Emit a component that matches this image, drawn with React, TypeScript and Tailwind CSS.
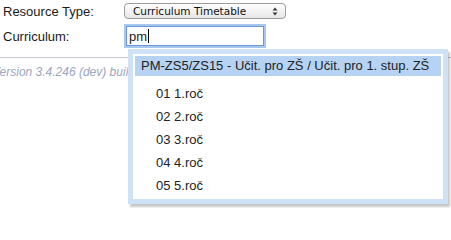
import React from "react"

const options = ["01 1.roč", "02 2.roč", "03 3.roč", "04 4.roč", "05 5.roč"]

function UpDownArrows() {
	return (
		<svg width="6" height="9" viewBox="0 0 6 9" aria-hidden="true">
			<path d="M3 0.5 L5.5 3.5 H0.5 Z" fill="#3a3a3a" />
			<path d="M3 8.5 L5.5 5.5 H0.5 Z" fill="#3a3a3a" />
		</svg>
	)
}

export default function App() {
	return (
		<div className="relative h-[208px] w-[451px] overflow-hidden bg-white font-['Liberation_Sans',Arial,sans-serif] text-[13px] text-[#1a1a1a]">
			{/* form */}
			<div className="flex flex-col gap-[5px] pt-[3px]">
				<div className="flex h-[16px] items-center">
					<label className="w-[124px] pl-[3px] leading-none">Resource Type:</label>
					<div className="flex h-[16px] w-[162px] items-center justify-between rounded-[4px] border border-[#9c9c9c] bg-gradient-to-b from-white to-[#e6e6e6] pl-[8px] pr-[7px] font-['DejaVu_Sans',sans-serif] text-[10.5px] leading-none text-[#111]">
						<span>Curriculum Timetable</span>
						<UpDownArrows />
					</div>
				</div>
				<div className="flex h-[24px] items-center">
					<label className="w-[126px] pl-[3px] leading-none">Curriculum:</label>
					<div className="flex h-[20px] w-[138px] items-center border border-[#6b97d3] bg-white pl-[2px] shadow-[0_0_0_2px_#a8c7ee]">
						<span className="leading-none">pm</span>
						<span className="ml-[1px] h-[14px] w-px bg-black" />
					</div>
				</div>
			</div>

			{/* footer */}
			<div className="mt-[9px] border-t border-[#c3c8d3] pt-[7px]">
				<p className="-ml-[8px] whitespace-nowrap text-[12px] italic leading-[15px] text-[#9da5bf]">
					Version 3.4.246 (dev) built 2013-05-14
				</p>
			</div>

			{/* autocomplete menu */}
			<div className="absolute left-[128px] top-[49px] w-[320px] border-[5px] border-[#cfe1f4] bg-white p-[2px] shadow-[2px_3px_2px_rgba(0,0,0,0.22)]">
				<div className="flex h-[20px] items-center whitespace-nowrap bg-[#b6d3f3] pl-[6px] text-[#222]">
					PM-ZS5/ZS15 - Učit. pro ZŠ / Učit. pro 1. stup. ZŠ
				</div>
				<ul className="mt-[6px]">
					{options.map((o) => (
						<li key={o} className="flex h-[23px] items-center pl-[21px] text-[#222]">
							{o}
						</li>
					))}
				</ul>
			</div>
		</div>
	)
}
